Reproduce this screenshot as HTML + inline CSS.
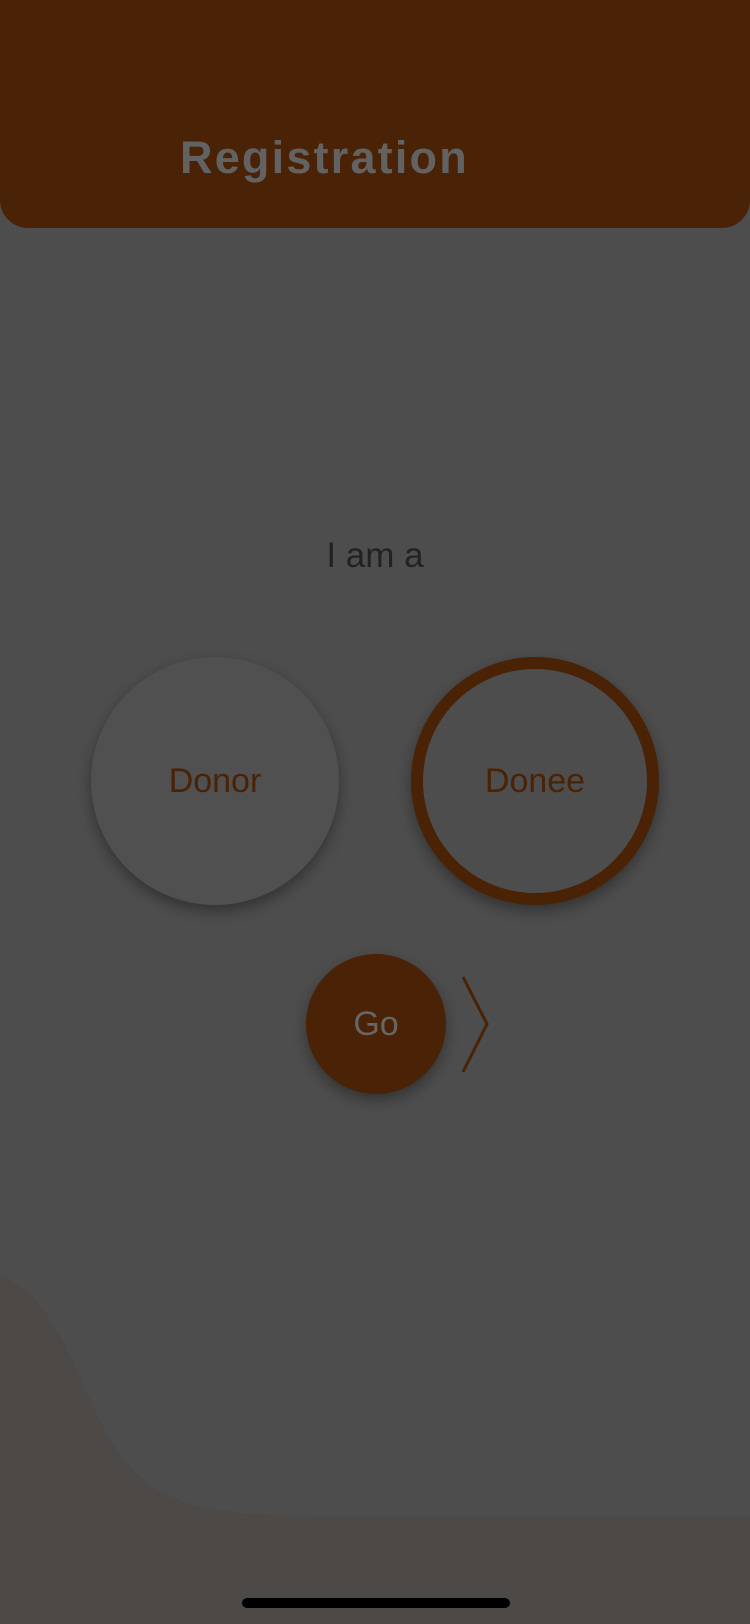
<!DOCTYPE html>
<html><head><style>
html,body{margin:0;padding:0;width:750px;height:1624px;overflow:hidden;background:#4d4d4d;font-family:"Liberation Sans",sans-serif;position:relative}
.hdr{position:absolute;left:0;top:0;width:750px;height:228px;background:#4a2205;border-radius:0 0 28px 28px}
.title{position:absolute;left:180px;top:132px;font-size:45px;font-weight:bold;color:#626262;letter-spacing:2.2px}
.iam{position:absolute;left:0;width:750px;top:536px;text-align:center;font-size:35px;color:#222}
.c{position:absolute;border-radius:50%;box-sizing:border-box;display:flex;align-items:center;justify-content:center;font-size:34px;color:#4a2205;box-shadow:0 6px 14px rgba(0,0,0,0.35)}
</style></head><body>
<svg style="position:absolute;left:0;top:0" width="750" height="1624">
<path d="M0 1276 C40 1290 60 1330 100 1420 C140 1500 180 1516 330 1516 L750 1516 L750 1624 L0 1624 Z" fill="#4d4946"/>
<path d="M463 977 L487 1024 L463 1072" fill="none" stroke="#4a2205" stroke-width="3"/>
<rect x="242" y="1598" width="268" height="10" rx="5" fill="#000"/>
</svg>
<div class="hdr"></div>
<div class="title">Registration</div>
<div class="iam">I am a</div>
<div class="c" style="left:91px;top:657px;width:248px;height:248px;background:#505050">Donor</div>
<div class="c" style="left:411px;top:657px;width:248px;height:248px;background:#4d4d4d;border:12px solid #4a2205">Donee</div>
<div class="c" style="left:306px;top:954px;width:140px;height:140px;background:#4a2205;color:#666">Go</div>
</body></html>
